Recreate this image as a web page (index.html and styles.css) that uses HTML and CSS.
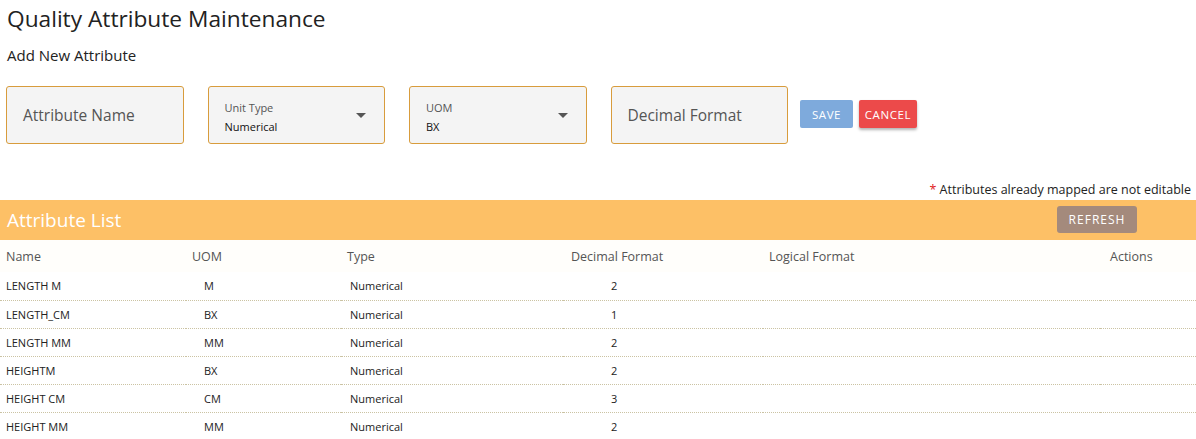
FILE: index.html
```html
<!DOCTYPE html>
<html>
<head>
<meta charset="utf-8">
<link rel="stylesheet" href="styles.css">
</head>
<body>
<div class="page">
  <h1 class="title">Quality Attribute Maintenance</h1>
  <h2 class="subtitle">Add New Attribute</h2>
  <div class="form-row">
    <div class="field"><span class="placeholder">Attribute Name</span></div>
    <div class="field select">
      <div class="sel-text"><span class="sel-label">Unit Type</span><span class="sel-value">Numerical</span></div>
      <span class="caret"></span>
    </div>
    <div class="field select">
      <div class="sel-text"><span class="sel-label">UOM</span><span class="sel-value">BX</span></div>
      <span class="caret"></span>
    </div>
    <div class="field"><span class="placeholder">Decimal Format</span></div>
    <div class="buttons">
      <button class="btn save">SAVE</button>
      <button class="btn cancel">CANCEL</button>
    </div>
  </div>
  <div class="note"><span class="star">*</span> Attributes already mapped are not editable</div>
  <div class="list-bar">
    <span class="list-title">Attribute List</span>
    <button class="btn refresh">REFRESH</button>
  </div>
  <table class="grid">
    <thead>
      <tr>
        <th class="c-name">Name</th>
        <th class="c-uom">UOM</th>
        <th class="c-type">Type</th>
        <th class="c-dec">Decimal Format</th>
        <th class="c-log">Logical Format</th>
        <th class="c-act">Actions</th>
      </tr>
    </thead>
    <tbody>
      <tr><td class="c-name">LENGTH M</td><td class="c-uom">M</td><td class="c-type">Numerical</td><td class="c-dec">2</td><td class="c-log"></td><td class="c-act"></td></tr>
      <tr><td class="c-name">LENGTH_CM</td><td class="c-uom">BX</td><td class="c-type">Numerical</td><td class="c-dec">1</td><td class="c-log"></td><td class="c-act"></td></tr>
      <tr><td class="c-name">LENGTH MM</td><td class="c-uom">MM</td><td class="c-type">Numerical</td><td class="c-dec">2</td><td class="c-log"></td><td class="c-act"></td></tr>
      <tr><td class="c-name">HEIGHTM</td><td class="c-uom">BX</td><td class="c-type">Numerical</td><td class="c-dec">2</td><td class="c-log"></td><td class="c-act"></td></tr>
      <tr><td class="c-name">HEIGHT CM</td><td class="c-uom">CM</td><td class="c-type">Numerical</td><td class="c-dec">3</td><td class="c-log"></td><td class="c-act"></td></tr>
      <tr><td class="c-name">HEIGHT MM</td><td class="c-uom">MM</td><td class="c-type">Numerical</td><td class="c-dec">2</td><td class="c-log"></td><td class="c-act"></td></tr>
    </tbody>
  </table>
</div>
</body>
</html>
```
FILE: styles.css
```css
* { box-sizing: border-box; }
html, body { margin: 0; padding: 0; background: #fff; }
body {
  font-family: "Open Sans", "Noto Sans", sans-serif;
  color: #222;
  overflow: hidden;
}
.page { width: 1196px; }
.title {
  margin: 0;
  padding: 4px 0 0 7px;
  font-size: 22.7px;
  font-weight: 400;
  line-height: 30px;
  color: #222;
}
.subtitle {
  margin: 0;
  padding: 12px 0 0 7px;
  font-size: 15px;
  font-weight: 400;
  line-height: 18px;
  color: #222;
}
.form-row {
  display: flex;
  align-items: center;
  gap: 24px;
  padding: 22px 0 0 6px;
}
.field {
  width: 177.5px;
  height: 58px;
  background: #f4f4f4;
  border: 1px solid #d89c3c;
  border-radius: 3px;
  display: flex;
  align-items: center;
  padding: 0 16px;
  flex: none;
}
.placeholder { font-size: 15.5px; color: #555; }
.select { justify-content: space-between; padding-right: 18px; }
.sel-text { display: flex; flex-direction: column; padding-top: 4px; }
.sel-label { font-size: 11px; color: #555; line-height: 19px; }
.sel-value { font-size: 11px; color: #111; line-height: 19px; }
.caret {
  width: 0; height: 0;
  border-left: 5px solid transparent;
  border-right: 5px solid transparent;
  border-top: 5px solid #555;
}
.buttons { display: flex; gap: 6px; margin-left: -12px; margin-top: -2px; }
.btn {
  font-family: inherit;
  border: none;
  border-radius: 2px;
  color: #fff;
  font-size: 11.5px;
  letter-spacing: 0.6px;
  height: 28px;
  padding: 0;
  cursor: pointer;
}
.save { background: #7eaadc; width: 53px; }
.cancel { background: #ec4a4a; width: 58px; box-shadow: 0 2px 3px rgba(0,0,0,0.3); }
.note {
  text-align: right;
  padding: 37px 5px 0 0;
  font-size: 12.5px;
  line-height: 18px;
  color: #222;
}
.star { color: #e02020; }
.list-bar {
  margin-top: 1px;
  height: 40px;
  background: #fdc066;
  display: flex;
  align-items: center;
  justify-content: space-between;
  padding: 0 59px 0 7px;
}
.list-title { color: #fff; font-size: 19px; }
.refresh {
  background: #a48a7c;
  width: 80px;
  height: 27px;
  padding: 0;
  font-size: 12px;
  letter-spacing: 1px;
  border-radius: 3px;
  margin-top: -1px;
}
.grid {
  width: 100%;
  border-collapse: collapse;
  table-layout: fixed;
}
.grid th {
  font-weight: 400;
  font-size: 12.5px;
  color: #555;
  text-align: left;
  height: 32px;
  padding: 0 0 0 6px;
  background: #fffefb;
}
.grid td {
  font-size: 11px;
  color: #222;
  height: 28px;
  padding: 0 0 0 6px;
  border-bottom: 1px dotted #cbc3a3;
}
.grid th.c-name { width: 186px; }
.grid th.c-uom { width: 155px; }
.grid th.c-type { width: 222px; }
.grid th.c-dec { width: 200px; padding-left: 8px; }
.grid th.c-log { width: 337px; }
.grid th.c-act { padding-left: 10px; }
.grid td.c-uom { padding-left: 18px; }
.grid td.c-type { padding-left: 9px; }
.grid td.c-dec { padding-left: 48px; }
```
